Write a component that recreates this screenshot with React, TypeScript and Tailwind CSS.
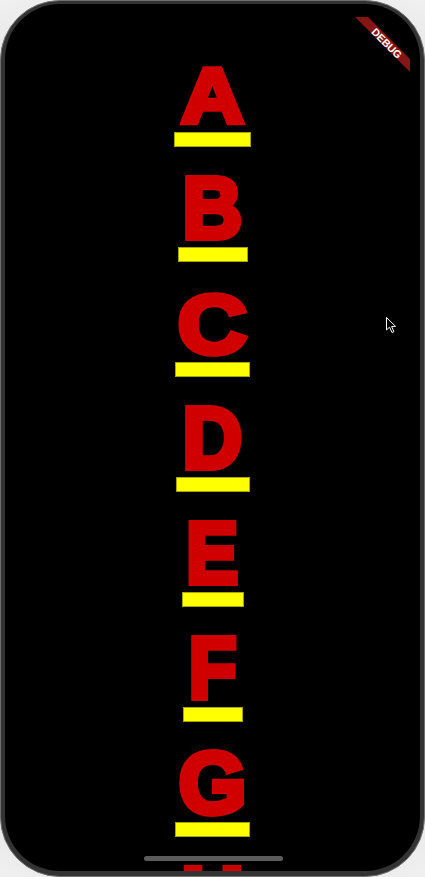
import React from 'react';

interface Row {
  ch: string;
  bar: number;
  fx?: string;
}

// bar widths read off the reference, each letter caught at its own frame of the bounce
const rows: Row[] = [
  { ch: 'A', bar: 77, fx: 'scale-y-90 origin-[50%_77px]' },
  { ch: 'B', bar: 70, fx: 'scale-x-95' },
  { ch: 'C', bar: 75, fx: 'scale-x-110 scale-y-95 origin-[50%_77px]' },
  { ch: 'D', bar: 74, fx: 'scale-x-95' },
  { ch: 'E', bar: 62, fx: 'scale-x-90' },
  { ch: 'F', bar: 60, fx: 'scale-x-90' },
  { ch: 'G', bar: 75 },
  { ch: 'H', bar: 70 },
];

const App: React.FC = () => {
  return (
    <div className="relative w-[425px] h-[877px] overflow-hidden bg-[radial-gradient(circle_at_50%_50%,#9a9a9a_0%,#d8d8d8_70%,#f0f0f0_100%)]">
      {/* phone body */}
      <div className="w-full h-full rounded-[60px] bg-[#333333] border border-[#707070] pt-[3px] px-[4px] pb-[5px]">
        {/* screen */}
        <div className="relative h-full rounded-[55px] bg-black overflow-hidden">
          <div className="flex flex-col items-center pt-[45px] font-['Liberation_Sans',Arial,sans-serif] font-bold">
            {rows.map((r) => (
              <div key={r.ch} className="flex flex-col items-center mb-[17px]">
                <span
                  className={`block h-[87px] text-[87px] leading-none text-[#d10000] [-webkit-text-stroke:6px_#d10000] ${r.fx ?? ''}`}
                >
                  {r.ch}
                </span>
                <div
                  className="-mt-[4px] h-[15px] bg-[#ffff00] border border-[#a8a400]"
                  style={{ width: r.bar }}
                />
              </div>
            ))}
          </div>

          {/* home indicator */}
          <div className="absolute top-[852px] left-[139px] w-[139px] h-[5px] rounded-full bg-[#5c5c5c]" />
        </div>
      </div>

      {/* debug banner + pointer */}
      <svg className="absolute inset-0 pointer-events-none" width="425" height="877" viewBox="0 0 425 877">
        <polygon points="355,17 368,17 410,59 410,72" fill="#861616" />
        <text
          x="0"
          y="0"
          transform="translate(386 44) rotate(45)"
          textAnchor="middle"
          dominantBaseline="middle"
          fill="#ffffff"
          fontFamily="'Liberation Sans', Arial, sans-serif"
          fontWeight="700"
          fontSize="10.5"
        >
          DEBUG
        </text>
        <path
          d="M386.5 317.5 L386.5 330 L389.5 327.2 L392 332.5 L394 331.6 L391.6 326.5 L395.5 326.3 Z"
          fill="#000000"
          stroke="#ffffff"
          strokeWidth="1"
          strokeLinejoin="round"
        />
      </svg>
    </div>
  );
};

export default App;
